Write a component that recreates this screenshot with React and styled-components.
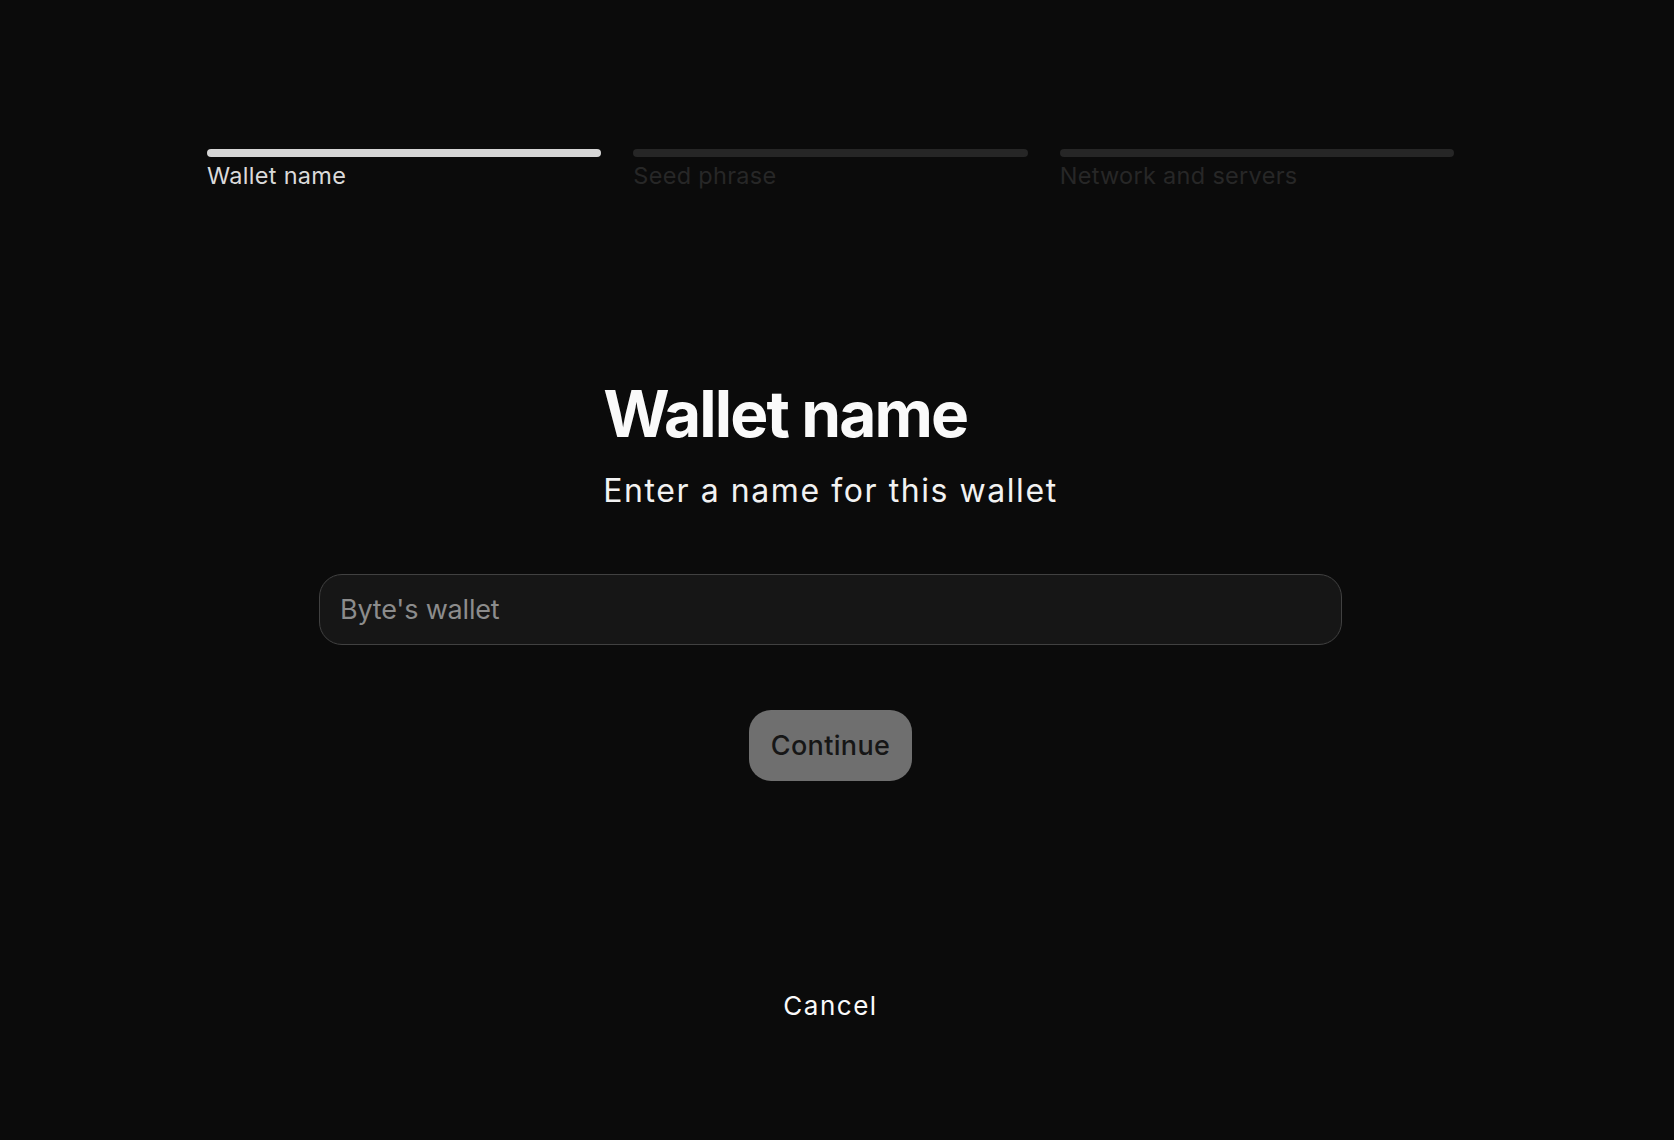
import React from "react";
import styled, { createGlobalStyle } from "styled-components";

const GlobalStyle = createGlobalStyle`
  html, body {
    margin: 0;
    padding: 0;
    background: #0b0b0b;
  }
  body {
    font-family: Inter, "Noto Sans", "Liberation Sans", sans-serif;
    color: #fafafa;
  }
  * { box-sizing: border-box; }
`;

const Page = styled.div`
  min-height: 100vh;
  padding: 149px 13px 0 0;
  display: flex;
  flex-direction: column;
  align-items: center;
`;

const Stepper = styled.div`
  width: 1247px;
  display: grid;
  grid-template-columns: repeat(3, 1fr);
  column-gap: 32px;
`;

const Step = styled.div`
  display: flex;
  flex-direction: column;
`;

const StepBar = styled.div`
  height: 8px;
  border-radius: 4px;
  background: ${(p) => (p.$active ? "#d6d6d6" : "#262626")};
`;

const StepLabel = styled.div`
  margin-top: 5px;
  font-size: 23.5px;
  line-height: 28px;
  letter-spacing: 0.3px;
  color: ${(p) => (p.$active ? "#dadada" : "#272727")};
`;

const Heading = styled.div`
  margin-top: 186px;
  display: flex;
  flex-direction: column;
  align-items: flex-start;
`;

const Title = styled.h1`
  margin: 0;
  font-size: 64px;
  line-height: 76.8px;
  font-weight: 700;
  letter-spacing: -1.9px;
  color: #fafafa;
`;

const Subtitle = styled.p`
  margin: 18.7px 0 0;
  font-size: 32px;
  line-height: 40px;
  font-weight: 400;
  letter-spacing: 1.57px;
  color: #f2f2f2;
`;

const NameInput = styled.input`
  margin-top: 63px;
  width: 1023px;
  height: 71px;
  padding: 0 20px;
  border: 1.5px solid #414141;
  border-radius: 23px;
  background: #161616;
  color: #e8e8e8;
  font-family: Inter, "Noto Sans", "Liberation Sans", sans-serif;
  font-size: 27px;
  letter-spacing: -0.2px;
  outline: none;

  &::placeholder {
    color: #8c8c8c;
  }
`;

const ContinueButton = styled.button`
  margin-top: 65px;
  height: 71px;
  padding: 0 22px;
  border: none;
  border-radius: 22px;
  background: #6f6f6f;
  color: #161616;
  font-family: Inter, "Noto Sans", "Liberation Sans", sans-serif;
  font-size: 27px;
  font-weight: 500;
  letter-spacing: 0.35px;
  cursor: pointer;
`;

const CancelButton = styled.button`
  margin-top: 209px;
  padding: 0;
  border: none;
  background: transparent;
  color: #fafafa;
  font-family: Inter, "Noto Sans", "Liberation Sans", sans-serif;
  font-size: 26px;
  line-height: 32px;
  font-weight: 400;
  letter-spacing: 1.5px;
  cursor: pointer;
`;

const steps = ["Wallet name", "Seed phrase", "Network and servers"];

export default function App() {
  return (
    <>
      <GlobalStyle />
      <Page>
        <Stepper>
          {steps.map((s, i) => (
            <Step key={s}>
              <StepBar $active={i === 0} />
              <StepLabel $active={i === 0}>{s}</StepLabel>
            </Step>
          ))}
        </Stepper>
        <Heading>
          <Title>Wallet name</Title>
          <Subtitle>Enter a name for this wallet</Subtitle>
        </Heading>
        <NameInput placeholder="Byte's wallet" />
        <ContinueButton>Continue</ContinueButton>
        <CancelButton>Cancel</CancelButton>
      </Page>
    </>
  );
}
